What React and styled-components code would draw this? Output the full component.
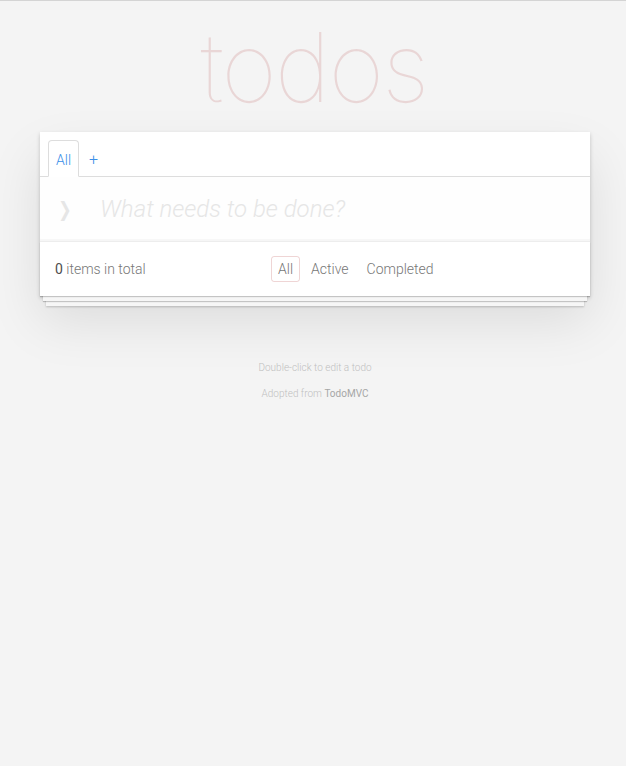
import React from "react";
import styled, { createGlobalStyle } from "styled-components";

const Global = createGlobalStyle`
  html, body { margin: 0; padding: 0; }
  body {
    background: #f4f4f4;
    font-family: Roboto, "Liberation Sans", Arial, sans-serif;
    font-weight: 300;
    color: #4d4d4d;
    border-top: 1px solid #d4d4d4;
    min-height: 765px;
  }
`;

const Page = styled.div`
  display: flex;
  flex-direction: column;
  padding-left: 40px;
  width: 550px;
`;

const Title = styled.h1`
  margin: 15px 0 0 -2px;
  height: 116px;
  text-align: center;
  font-family: Inter, "Liberation Sans", sans-serif;
  font-weight: 100;
  font-size: 96px;
  line-height: 102px;
  letter-spacing: -2px;
  color: rgba(175, 47, 47, 0.15);
`;

const Card = styled.section`
  background: #fff;
  box-shadow: 0 2px 4px rgba(0, 0, 0, 0.2), 0 25px 50px 0 rgba(0, 0, 0, 0.1);
`;

const TabBar = styled.ul`
  list-style: none;
  margin: 0;
  padding: 8px 8px 0;
  display: flex;
  border-bottom: 1px solid #ddd;
`;

const Tab = styled.li`
  margin-bottom: -1px;
  margin-right: 2px;
  padding: 2px 7px 0;
  height: 37px;
  display: flex;
  align-items: center;
  font-family: Roboto, "Liberation Sans", sans-serif;
  font-size: ${(p) => (p.$plus ? "16px" : "14px")};
  font-weight: 300;
  color: #3b8fe8;
  border: 1px solid ${(p) => (p.$active ? "#ddd" : "transparent")};
  border-bottom-color: ${(p) => (p.$active ? "#fff" : "transparent")};
  border-radius: 4px 4px 0 0;
  background: ${(p) => (p.$active ? "#fff" : "transparent")};
  box-sizing: border-box;
`;

const InputRow = styled.div`
  display: flex;
  align-items: center;
  height: 64px;
  background: rgba(0, 0, 0, 0.003);
  box-shadow: inset 0 -2px 1px rgba(0, 0, 0, 0.03);
  border-bottom: 1px solid #ededed;
`;

const Toggle = styled.span`
  width: 50px;
  text-align: center;
  font-family: "DejaVu Sans", sans-serif;
  font-size: 20px;
  font-weight: bold;
  color: #e6e6e6;
  transform: scaleX(0.8);
`;

const Input = styled.input`
  flex: 1;
  border: 0;
  outline: none;
  background: transparent;
  font-family: Roboto, "Liberation Sans", sans-serif;
  font-size: 24px;
  font-weight: 300;
  font-style: italic;
  padding: 0 0 0 10px;
  &::placeholder {
    color: #e6e6e6;
    font-style: italic;
  }
`;

const Footer = styled.footer`
  display: flex;
  align-items: center;
  height: 54px;
  padding: 0 15px;
  color: #777;
  font-family: Roboto, "Liberation Sans", sans-serif;
  font-size: 14px;
  font-weight: 300;
  box-shadow: 0 1px 1px rgba(0, 0, 0, 0.2), 0 8px 0 -3px #f6f6f6,
    0 9px 1px -3px rgba(0, 0, 0, 0.2), 0 16px 0 -6px #f6f6f6,
    0 17px 2px -6px rgba(0, 0, 0, 0.2);
`;

const Count = styled.span`
  width: 216px;
  strong { font-weight: 400; color: #4d4d4d; }
`;

const Filters = styled.ul`
  list-style: none;
  margin: 0;
  padding: 0;
  display: flex;
  gap: 4px;
`;

const Filter = styled.li`
  padding: 4px 6px 3px;
  border: 1px solid ${(p) => (p.$selected ? "rgba(175, 47, 47, 0.2)" : "transparent")};
  border-radius: 3px;
  line-height: 17px;
`;

const Info = styled.footer`
  margin-top: 66px;
  text-align: center;
  font-family: Roboto, "Liberation Sans", sans-serif;
  font-size: 10px;
  font-weight: 300;
  color: #bfbfbf;
  display: flex;
  flex-direction: column;
  gap: 15px;
  p { margin: 0; line-height: 11px; }
  a { color: #a6a6a6; font-weight: 400; text-decoration: none; }
`;

export default function App() {
  return (
    <>
      <Global />
      <Page>
        <Title>todos</Title>
        <Card>
          <TabBar>
            <Tab $active>All</Tab>
            <Tab $plus>+</Tab>
          </TabBar>
          <InputRow>
            <Toggle>❯</Toggle>
            <Input placeholder="What needs to be done?" />
          </InputRow>
          <Footer>
            <Count>
              <strong>0</strong> items in total
            </Count>
            <Filters>
              <Filter $selected>All</Filter>
              <Filter>Active</Filter>
              <Filter>Completed</Filter>
            </Filters>
          </Footer>
        </Card>
        <Info>
          <p>Double-click to edit a todo</p>
          <p>
            Adopted from <a href="#">TodoMVC</a>
          </p>
        </Info>
      </Page>
    </>
  );
}
